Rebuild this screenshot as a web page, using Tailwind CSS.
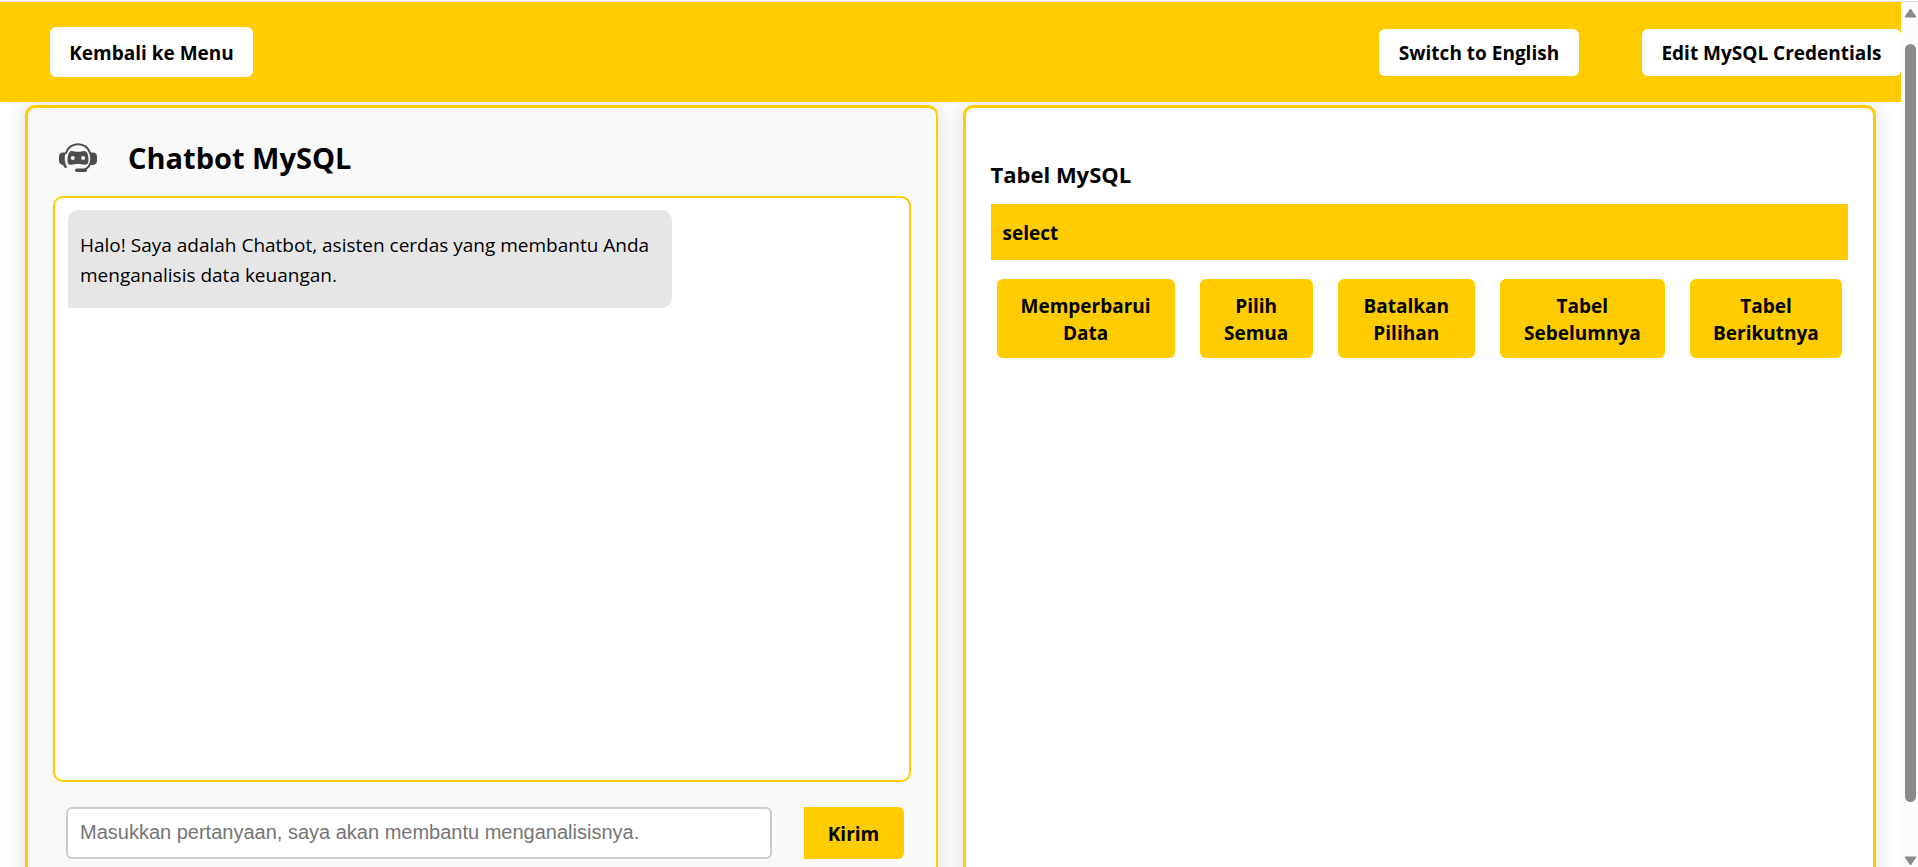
<!DOCTYPE html>
<html lang="id">
<head>
<meta charset="utf-8">
<meta name="viewport" content="width=device-width, initial-scale=1">
<title>Chatbot MySQL</title>
<script src="https://cdn.jsdelivr.net/npm/@tailwindcss/browser@4"></script>
</head>
<body class="flex h-screen flex-col overflow-hidden bg-white font-['Open_Sans','Noto_Sans',sans-serif] text-[19px] text-black">
  <div class="h-[2px] shrink-0 border-b border-[#e0e0e0] bg-white"></div>
  <div class="flex min-h-0 flex-1">
  <div class="flex min-w-0 flex-1 flex-col overflow-hidden">
    <header class="relative z-10 flex h-[100px] shrink-0 items-center bg-[#ffcc00] pl-[50px] font-bold">
      <button type="button" class="h-[50px] w-[203px] rounded-md bg-white pt-0.5">Kembali ke Menu</button>
      <button type="button" class="ml-auto h-[47px] w-[200px] rounded-md bg-white pt-0.5">Switch to English</button>
      <button type="button" class="ml-[63px] h-[47px] w-[259px] rounded-md bg-white pt-0.5">Edit MySQL Credentials</button>
    </header>
    <main class="flex min-h-0 flex-1 gap-[25px] px-[25px] pt-[3px]">
      <section class="flex h-[900px] min-w-0 flex-1 flex-col rounded-[10px] border-3 border-r-2 border-[#ffcc00] bg-[#f9f9f9] px-[25px] shadow-[0_0_20px_rgba(0,0,0,0.15)]">
        <div class="flex h-[88px] shrink-0 items-center pt-3 pl-1.5">
          <svg class="h-[30px] w-[38px]" viewBox="0 0 38 30" fill="none" aria-hidden="true">
            <path d="M6.5 11C8.5 5 13 1.3 19 1.3S29.500 5 31.500 11" stroke="#4d4d4d" stroke-width="2"/>
            <path d="M31.500 11C34 20 29.500 26 23 27.500" stroke="#4d4d4d" stroke-width="2"/>
            <path d="M6.800 9.500C5.200 14 5.300 19 8.200 24.500L6.500 25C5 24.500 4.500 23 4 22C1.300 21.800 0 20 0 17.500V13.500C0 11 1.500 9.700 4 9.500Z" fill="#4d4d4d"/>
            <path d="M31.200 9.500C32.800 13.500 32.800 18 31.500 22H34C36.700 21.800 38 20 38 17.500V13.500C38 11 36.500 9.700 34 9.500Z" fill="#4d4d4d"/>
            <path d="M11.500 8.300C14 7.300 15 8.800 19 8.800S24 7.300 26.500 8.300C28.500 9.200 29.500 13 29.500 17.500C29.500 20.500 28.500 21.600 26 21.700C23.500 21.800 22 21 19 21S14.500 21.800 12 21.700C9.500 21.600 8.500 20.500 8.500 17.500C8.500 13 9.500 9.200 11.500 8.300Z" fill="#4d4d4d"/>
            <circle cx="13.800" cy="15" r="2" fill="#f9f9f9"/>
            <circle cx="24.200" cy="15" r="2" fill="#f9f9f9"/>
            <rect x="16" y="25.500" width="12" height="3.500" rx="1.700" fill="#4d4d4d"/>
          </svg>
          <h1 class="ml-[31px] text-[29px] font-bold">Chatbot MySQL</h1>
        </div>
        <div class="h-[586px] shrink-0 rounded-[10px] border-2 border-[#ffcc00] bg-white p-3">
          <p class="ml-px w-[604px] rounded-[10px] rounded-bl-none bg-[#e6e6e6] px-3 pt-5 pb-[18px] leading-[30px]">Halo! Saya adalah Chatbot, asisten cerdas yang membantu Anda menganalisis data keuangan.</p>
        </div>
        <form class="mt-[25px] flex h-[52px] shrink-0 gap-8 pr-[7px] pl-[13px]">
          <input type="text" aria-label="Pertanyaan" placeholder="Masukkan pertanyaan, saya akan membantu menganalisisnya." class="min-w-0 flex-1 rounded-md border-2 border-[#cccccc] bg-white px-3 pb-0.5 font-['Liberation_Sans',sans-serif] text-xl placeholder:text-[#757575]">
          <button type="button" class="w-[100px] rounded-r-md bg-[#ffcc00] pt-0.5 font-bold">Kirim</button>
        </form>
      </section>
      <section class="h-[900px] min-w-0 flex-1 rounded-[10px] border-3 border-[#ffcc00] bg-white px-[25px] pt-[49px] shadow-[0_0_20px_rgba(0,0,0,0.15)]">
        <h2 class="text-[22px] leading-[34px] font-bold">Tabel MySQL</h2>
        <table class="mt-[13px] w-full">
          <thead><tr><th scope="col" class="h-14 bg-[#ffcc00] px-3 pt-0.5 text-left font-bold">select</th></tr></thead>
        </table>
        <div class="mt-[19px] flex h-[79px] gap-[25px] px-1.5 leading-[27px] font-bold">
          <button type="button" class="flex-[178_1_0px] rounded-md bg-[#ffcc00] pt-0.5">Memperbarui<br>Data</button>
          <button type="button" class="flex-[113_1_0px] rounded-md bg-[#ffcc00] pt-0.5">Pilih<br>Semua</button>
          <button type="button" class="flex-[137_1_0px] rounded-md bg-[#ffcc00] pt-0.5">Batalkan<br>Pilihan</button>
          <button type="button" class="flex-[165_1_0px] rounded-md bg-[#ffcc00] pt-0.5">Tabel<br>Sebelumnya</button>
          <button type="button" class="flex-[152_1_0px] rounded-md bg-[#ffcc00] pt-0.5">Tabel<br>Berikutnya</button>
        </div>
      </section>
    </main>
  </div>
  <div class="flex w-[17px] shrink-0 flex-col items-center bg-[#fcfcfc] pt-1.5 pl-0.5" aria-hidden="true">
    <svg class="h-[10px] w-[13px] shrink-0" viewBox="0 0 13 10"><path d="M6.500 1L12 9H1Z" fill="#8b8b8b" stroke="#8b8b8b" stroke-linejoin="round"/></svg>
    <div class="mt-[26px] mb-[54px] w-[11px] flex-1 rounded-full bg-[#8b8b8b]"></div>
    <svg class="mb-px h-[10px] w-[13px] shrink-0" viewBox="0 0 13 10"><path d="M6.500 9L12 1H1Z" fill="#8b8b8b" stroke="#8b8b8b" stroke-linejoin="round"/></svg>
  </div>
  </div>
</body>
</html>
